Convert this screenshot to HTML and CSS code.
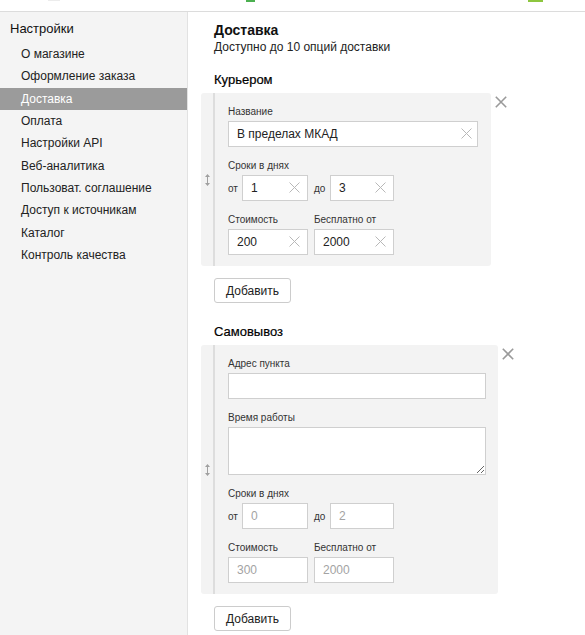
FILE: index.html
```html
<!DOCTYPE html>
<html lang="ru">
<head>
<meta charset="utf-8">
<title>Доставка</title>
<link rel="stylesheet" href="styles.css">
</head>
<body>
<header class="topbar">
  <span class="bit bit-grey"></span>
  <span class="bit bit-green"></span>
  <span class="bit bit-lime"></span>
</header>
<div class="layout">
  <nav class="sidebar">
    <div class="side-title">Настройки</div>
    <ul class="side-list">
      <li class="side-item">О магазине</li>
      <li class="side-item">Оформление заказа</li>
      <li class="side-item active">Доставка</li>
      <li class="side-item">Оплата</li>
      <li class="side-item">Настройки API</li>
      <li class="side-item">Веб-аналитика</li>
      <li class="side-item">Пользоват. соглашение</li>
      <li class="side-item">Доступ к источникам</li>
      <li class="side-item">Каталог</li>
      <li class="side-item">Контроль качества</li>
    </ul>
  </nav>
  <main class="main">
    <h1 class="page-title">Доставка</h1>
    <div class="page-sub">Доступно до 10 опций доставки</div>

    <h2 class="section-title">Курьером</h2>
    <div class="card-row">
      <div class="card card-courier">
        <div class="handle">
          <svg width="5" height="12" viewBox="0 0 5 12"><path d="M2.5 0 L5 3 L3 3 L3 9 L5 9 L2.5 12 L0 9 L2 9 L2 3 L0 3 Z" fill="#a0a0a0"/></svg>
        </div>
        <div class="card-body">
          <div class="field">
            <label class="label">Название</label>
            <div class="inp-wrap">
              <input class="inp inp-full" type="text" value="В пределах МКАД">
              <svg class="clear" width="11" height="11" viewBox="0 0 11 11"><path d="M0.5 0.5 L10.5 10.5 M10.5 0.5 L0.5 10.5" stroke="#b8b8b8" stroke-width="1"/></svg>
            </div>
          </div>
          <div class="field">
            <label class="label">Сроки в днях</label>
            <div class="pair">
              <span class="pre pre-from">от</span>
              <div class="inp-wrap">
                <input class="inp inp-small" type="text" value="1">
                <svg class="clear clear-small" width="11" height="11" viewBox="0 0 11 11"><path d="M0.5 0.5 L10.5 10.5 M10.5 0.5 L0.5 10.5" stroke="#b8b8b8" stroke-width="1"/></svg>
              </div>
              <span class="pre pre-to">до</span>
              <div class="inp-wrap">
                <input class="inp inp-small inp-small-to" type="text" value="3">
                <svg class="clear clear-small" width="11" height="11" viewBox="0 0 11 11"><path d="M0.5 0.5 L10.5 10.5 M10.5 0.5 L0.5 10.5" stroke="#b8b8b8" stroke-width="1"/></svg>
              </div>
            </div>
          </div>
          <div class="field cost-row">
            <div class="cost-col">
              <label class="label">Стоимость</label>
              <div class="inp-wrap">
                <input class="inp inp-cost" type="text" value="200">
                <svg class="clear clear-small" width="11" height="11" viewBox="0 0 11 11"><path d="M0.5 0.5 L10.5 10.5 M10.5 0.5 L0.5 10.5" stroke="#b8b8b8" stroke-width="1"/></svg>
              </div>
            </div>
            <div class="cost-col">
              <label class="label">Бесплатно от</label>
              <div class="inp-wrap">
                <input class="inp inp-cost" type="text" value="2000">
                <svg class="clear clear-small" width="11" height="11" viewBox="0 0 11 11"><path d="M0.5 0.5 L10.5 10.5 M10.5 0.5 L0.5 10.5" stroke="#b8b8b8" stroke-width="1"/></svg>
              </div>
            </div>
          </div>
        </div>
      </div>
      <button class="remove" type="button" aria-label="Удалить">
        <svg width="12" height="12" viewBox="0 0 12 12"><path d="M0.8 0.8 L11.2 11.2 M11.2 0.8 L0.8 11.2" stroke="#9a9a9a" stroke-width="1.6"/></svg>
      </button>
    </div>
    <button class="add-btn" type="button">Добавить</button>

    <h2 class="section-title section-second">Самовывоз</h2>
    <div class="card-row">
      <div class="card card-pickup">
        <div class="handle">
          <svg width="5" height="12" viewBox="0 0 5 12"><path d="M2.5 0 L5 3 L3 3 L3 9 L5 9 L2.5 12 L0 9 L2 9 L2 3 L0 3 Z" fill="#a0a0a0"/></svg>
        </div>
        <div class="card-body">
          <div class="field">
            <label class="label">Адрес пункта</label>
            <input class="inp inp-full" type="text" value="">
          </div>
          <div class="field">
            <label class="label">Время работы</label>
            <textarea class="area"></textarea>
          </div>
          <div class="field">
            <label class="label">Сроки в днях</label>
            <div class="pair">
              <span class="pre pre-from">от</span>
              <input class="inp inp-small" type="text" placeholder="0">
              <span class="pre pre-to">до</span>
              <input class="inp inp-small inp-small-to" type="text" placeholder="2">
            </div>
          </div>
          <div class="field cost-row">
            <div class="cost-col">
              <label class="label">Стоимость</label>
              <input class="inp inp-cost" type="text" placeholder="300">
            </div>
            <div class="cost-col">
              <label class="label">Бесплатно от</label>
              <input class="inp inp-cost" type="text" placeholder="2000">
            </div>
          </div>
        </div>
      </div>
      <button class="remove" type="button" aria-label="Удалить">
        <svg width="12" height="12" viewBox="0 0 12 12"><path d="M0.8 0.8 L11.2 11.2 M11.2 0.8 L0.8 11.2" stroke="#9a9a9a" stroke-width="1.6"/></svg>
      </button>
    </div>
    <button class="add-btn" type="button">Добавить</button>
  </main>
</div>
</body>
</html>
```

FILE: styles.css
```css
* { box-sizing: border-box; }

html, body {
  margin: 0;
  padding: 0;
  height: 100%;
}

body {
  font-family: "Liberation Sans", Arial, sans-serif;
  color: #222;
  background: #fff;
  overflow: hidden;
}

.topbar {
  height: 12px;
  border-bottom: 1px solid #dcdcdc;
  display: flex;
  align-items: flex-start;
}

.bit { display: block; }
.bit-grey { margin-left: 48px; width: 12px; height: 1px; background: #ececec; }
.bit-green { margin-left: 186px; width: 9px; height: 2px; background: #4cb050; }
.bit-lime { margin-left: 273px; width: 15px; height: 2px; background: #8dc63f; }

.layout {
  display: flex;
  height: calc(100% - 12px);
}

.sidebar {
  width: 188px;
  flex: none;
  background: #f4f4f4;
  border-right: 1px solid #e2e2e2;
  padding-top: 6px;
}

.side-title {
  font-size: 13px;
  line-height: 22px;
  color: #111;
  padding-left: 10px;
  margin-bottom: 3px;
}

.side-list {
  list-style: none;
  margin: 0;
  padding: 0;
}

.side-item {
  font-size: 12px;
  line-height: 22.33px;
  height: 22.33px;
  padding-left: 21px;
  color: #222;
}

.side-item.active {
  background: #9b9b9b;
  color: #fff;
}

.main {
  flex: 1;
  padding: 9px 0 0 26px;
}

.page-title {
  margin: 0;
  font-size: 14px;
  line-height: 18px;
  font-weight: bold;
  color: #111;
}

.page-sub {
  font-size: 12px;
  line-height: 16px;
  color: #222;
}

.section-title {
  margin: 17px 0 5px;
  font-size: 13px;
  line-height: 16px;
  font-weight: normal;
  color: #000;
  -webkit-text-stroke: 0.2px #000;
}

.section-second { margin-top: 21px; }

.card-row {
  display: flex;
  align-items: flex-start;
  margin-left: -13px;
}

.card {
  display: flex;
  background: #f3f3f3;
  border-radius: 3px;
}

.card-courier { width: 290px; }
.card-pickup { width: 297px; }

.handle {
  width: 12px;
  flex: none;
  display: flex;
  align-items: center;
  justify-content: center;
}

.handle svg { display: block; }

.card-body {
  flex: 1;
  border-left: 2px solid #dddddd;
  padding: 12px 13px 11px 13px;
}

.card-pickup .card-body { padding-right: 12px; }

.field { margin-bottom: 12px; }
.field:last-child { margin-bottom: 0; }

.label {
  display: block;
  font-size: 10px;
  line-height: 14px;
  color: #333;
  margin-bottom: 2px;
}

.inp-wrap { position: relative; }

.inp {
  display: block;
  height: 26px;
  border: 1px solid #cfcfcf;
  background: #fff;
  padding: 0 8px;
  font-family: "Liberation Sans", Arial, sans-serif;
  font-size: 12px;
  color: #222;
  outline: none;
  margin: 0;
}

.inp::placeholder { color: #a3a3a3; }

.inp-full { width: 100%; padding-right: 24px; }
.inp-small { width: 66px; }
.inp-small-to { width: 64px; }
.inp-cost { width: 80px; }

.clear {
  position: absolute;
  right: 6px;
  top: 7px;
  display: block;
}

.clear-small { right: 8px; }

.pair {
  display: flex;
  align-items: center;
}

.pre {
  font-size: 10px;
  color: #333;
}

.pre-from { width: 14px; }
.pre-to { width: 16px; margin-left: 6px; }

.cost-row {
  display: flex;
  gap: 6px;
}

.area {
  display: block;
  width: 100%;
  height: 48px;
  border: 1px solid #cfcfcf;
  background: #fff;
  margin: 0;
  font-family: "Liberation Sans", Arial, sans-serif;
  font-size: 12px;
  outline: none;
}

.remove {
  margin: 3px 0 0 4px;
  padding: 0;
  border: 0;
  background: none;
  width: 12px;
  height: 12px;
  display: block;
}

.remove svg { display: block; }

.add-btn {
  display: block;
  margin-top: 12px;
  height: 25px;
  padding: 0 11px;
  border: 1px solid #cccccc;
  border-radius: 3px;
  background: #fff;
  font-family: "Liberation Sans", Arial, sans-serif;
  font-size: 12px;
  color: #222;
}
```
